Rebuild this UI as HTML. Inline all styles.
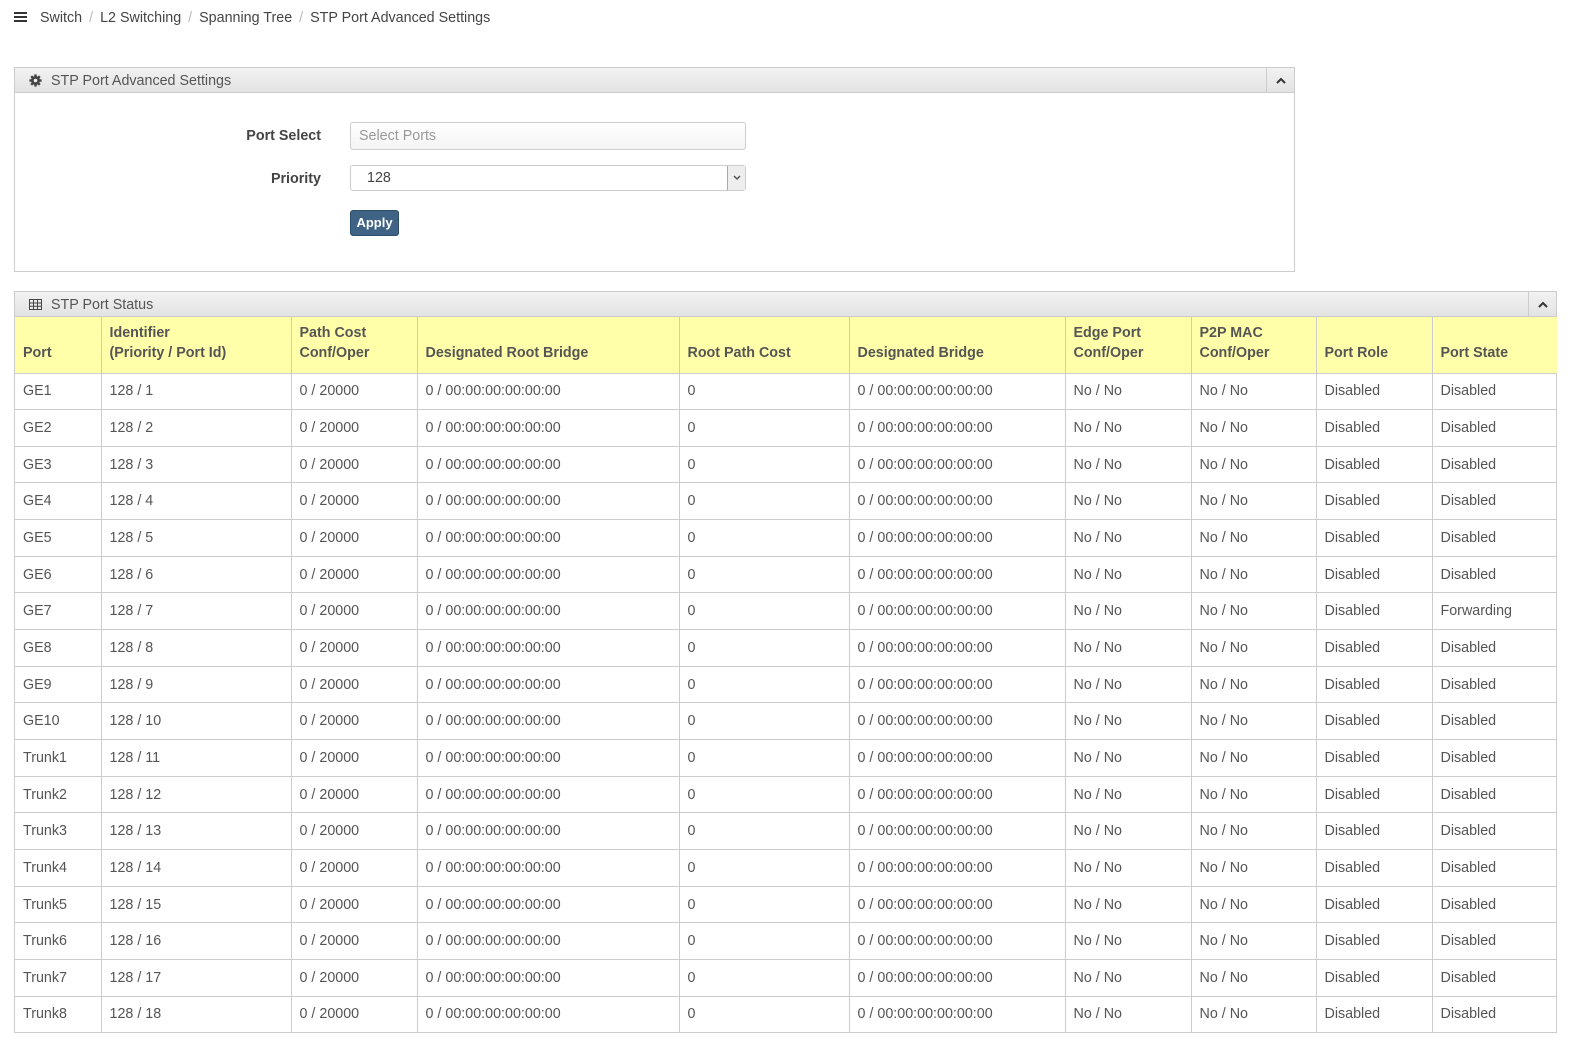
<!DOCTYPE html>
<html><head><meta charset="utf-8"><style>
*{box-sizing:border-box}
html,body{margin:0;overflow:hidden}
body{background:#fff;font-family:"Liberation Sans",Arial,sans-serif;font-size:14.3px;color:#555;width:1582px;height:1053px;position:relative}
.bc{position:absolute;left:14px;top:10px;font-size:14.3px;color:#444}
.bc .s{color:#bbb;margin:0 7px}
.box{position:absolute;border:1px solid #ccc;background:#fff}
.hd{height:25px;background:linear-gradient(#f2f2f2,#e3e3e3);border-bottom:1px solid #ccc;position:relative;font-size:14.3px;color:#555;padding:5px 0 0 36px}
.hd .ic{position:absolute;left:14px;top:6px}
.hd .col{position:absolute;right:0;top:0;width:28px;height:24px;border-left:1px solid #ccc;text-align:center}
.lab{position:absolute;font-weight:bold;color:#444;text-align:right;width:150px}
table{border-collapse:collapse;table-layout:fixed;width:1542px}
th{background:#ffffaa;text-align:left;vertical-align:bottom;font-weight:bold;color:#555;padding:0 8px 10px;height:56px;border:1px solid #ccc;border-top:none;line-height:20px}
td{height:36.67px;padding:0 8px;border:1px solid #ccc;color:#555}
tr th:first-child,tr td:first-child{border-left:none}
tr th:last-child,tr td:last-child{border-right:none}
</style></head><body>
<div class="bc"><svg width="13" height="12" viewBox="0 0 13 12" style="margin-right:13px;vertical-align:-1px"><path d="M0 2h13M0 6h13M0 10h13" stroke="#333" stroke-width="2"/></svg>Switch<span class="s">/</span>L2 Switching<span class="s">/</span>Spanning Tree<span class="s">/</span>STP Port Advanced Settings</div>

<div class="box" style="left:14px;top:67px;width:1281px;height:205px">
<div class="hd"><svg class="ic" width="13" height="13" viewBox="0 0 16 16"><circle cx="8" cy="8" r="5.5" fill="#444"/><g stroke="#444" stroke-width="3"><line x1="8" y1="0.5" x2="8" y2="15.5"/><line x1="0.5" y1="8" x2="15.5" y2="8"/><line x1="2.7" y1="2.7" x2="13.3" y2="13.3"/><line x1="13.3" y1="2.7" x2="2.7" y2="13.3"/></g><circle cx="8" cy="8" r="2.2" fill="#eee"/></svg>STP Port Advanced Settings
<div class="col"><svg width="12" height="24" viewBox="0 0 12 24"><path d="M2 15l4-4 4 4" fill="none" stroke="#333" stroke-width="2"/></svg></div></div>
<div class="lab" style="left:156px;top:60px">Port Select</div>
<div style="position:absolute;left:335px;top:54px;width:396px;height:28px;border:1px solid #ccc;border-radius:3px;background:linear-gradient(#fff,#f4f4f4);color:#999;padding:5px 8px">Select Ports</div>
<div class="lab" style="left:156px;top:103px">Priority</div>
<div style="position:absolute;left:335px;top:97px;width:396px;height:26px;border:1px solid #ccc;border-radius:3px;padding:4px 16px;color:#444">128<div style="position:absolute;right:0;top:0;width:18px;height:24px;border-left:1px solid #aaa;background:#eee;text-align:center"><svg width="10" height="24" viewBox="0 0 10 24"><path d="M2 10l3 3 3-3" fill="none" stroke="#555" stroke-width="1.5"/></svg></div></div>
<div style="position:absolute;left:335px;top:142px;width:49px;height:26px;background:#3e6384;border:1px solid #2d4e6b;border-radius:3px;color:#fff;font-weight:bold;font-size:13px;text-align:center;line-height:24px">Apply</div>
</div>

<div class="box" style="left:14px;top:291px;width:1543px;height:742px">
<div class="hd"><svg class="ic" width="13" height="12" viewBox="0 0 13 12" style="top:7px"><rect x="0.5" y="0.5" width="12" height="10" fill="none" stroke="#444"/><path d="M0.5 4h12M0.5 7.3h12M4.5 0.5v10M8.5 0.5v10" stroke="#444"/></svg>STP Port Status
<div class="col"><svg width="12" height="24" viewBox="0 0 12 24"><path d="M2 15l4-4 4 4" fill="none" stroke="#333" stroke-width="2"/></svg></div></div>
<table>
<colgroup><col style="width:86px"><col style="width:190px"><col style="width:126px"><col style="width:262px"><col style="width:170px"><col style="width:216px"><col style="width:126px"><col style="width:125px"><col style="width:116px"><col style="width:125px"></colgroup>
<tr><th>Port</th><th>Identifier<br>(Priority / Port Id)</th><th>Path Cost<br>Conf/Oper</th><th>Designated Root Bridge</th><th>Root Path Cost</th><th>Designated Bridge</th><th>Edge Port<br>Conf/Oper</th><th>P2P MAC<br>Conf/Oper</th><th>Port Role</th><th>Port State</th></tr>
<tr><td>GE1</td><td>128 / 1</td><td>0 / 20000</td><td>0 / 00:00:00:00:00:00</td><td>0</td><td>0 / 00:00:00:00:00:00</td><td>No / No</td><td>No / No</td><td>Disabled</td><td>Disabled</td></tr>
<tr><td>GE2</td><td>128 / 2</td><td>0 / 20000</td><td>0 / 00:00:00:00:00:00</td><td>0</td><td>0 / 00:00:00:00:00:00</td><td>No / No</td><td>No / No</td><td>Disabled</td><td>Disabled</td></tr>
<tr><td>GE3</td><td>128 / 3</td><td>0 / 20000</td><td>0 / 00:00:00:00:00:00</td><td>0</td><td>0 / 00:00:00:00:00:00</td><td>No / No</td><td>No / No</td><td>Disabled</td><td>Disabled</td></tr>
<tr><td>GE4</td><td>128 / 4</td><td>0 / 20000</td><td>0 / 00:00:00:00:00:00</td><td>0</td><td>0 / 00:00:00:00:00:00</td><td>No / No</td><td>No / No</td><td>Disabled</td><td>Disabled</td></tr>
<tr><td>GE5</td><td>128 / 5</td><td>0 / 20000</td><td>0 / 00:00:00:00:00:00</td><td>0</td><td>0 / 00:00:00:00:00:00</td><td>No / No</td><td>No / No</td><td>Disabled</td><td>Disabled</td></tr>
<tr><td>GE6</td><td>128 / 6</td><td>0 / 20000</td><td>0 / 00:00:00:00:00:00</td><td>0</td><td>0 / 00:00:00:00:00:00</td><td>No / No</td><td>No / No</td><td>Disabled</td><td>Disabled</td></tr>
<tr><td>GE7</td><td>128 / 7</td><td>0 / 20000</td><td>0 / 00:00:00:00:00:00</td><td>0</td><td>0 / 00:00:00:00:00:00</td><td>No / No</td><td>No / No</td><td>Disabled</td><td>Forwarding</td></tr>
<tr><td>GE8</td><td>128 / 8</td><td>0 / 20000</td><td>0 / 00:00:00:00:00:00</td><td>0</td><td>0 / 00:00:00:00:00:00</td><td>No / No</td><td>No / No</td><td>Disabled</td><td>Disabled</td></tr>
<tr><td>GE9</td><td>128 / 9</td><td>0 / 20000</td><td>0 / 00:00:00:00:00:00</td><td>0</td><td>0 / 00:00:00:00:00:00</td><td>No / No</td><td>No / No</td><td>Disabled</td><td>Disabled</td></tr>
<tr><td>GE10</td><td>128 / 10</td><td>0 / 20000</td><td>0 / 00:00:00:00:00:00</td><td>0</td><td>0 / 00:00:00:00:00:00</td><td>No / No</td><td>No / No</td><td>Disabled</td><td>Disabled</td></tr>
<tr><td>Trunk1</td><td>128 / 11</td><td>0 / 20000</td><td>0 / 00:00:00:00:00:00</td><td>0</td><td>0 / 00:00:00:00:00:00</td><td>No / No</td><td>No / No</td><td>Disabled</td><td>Disabled</td></tr>
<tr><td>Trunk2</td><td>128 / 12</td><td>0 / 20000</td><td>0 / 00:00:00:00:00:00</td><td>0</td><td>0 / 00:00:00:00:00:00</td><td>No / No</td><td>No / No</td><td>Disabled</td><td>Disabled</td></tr>
<tr><td>Trunk3</td><td>128 / 13</td><td>0 / 20000</td><td>0 / 00:00:00:00:00:00</td><td>0</td><td>0 / 00:00:00:00:00:00</td><td>No / No</td><td>No / No</td><td>Disabled</td><td>Disabled</td></tr>
<tr><td>Trunk4</td><td>128 / 14</td><td>0 / 20000</td><td>0 / 00:00:00:00:00:00</td><td>0</td><td>0 / 00:00:00:00:00:00</td><td>No / No</td><td>No / No</td><td>Disabled</td><td>Disabled</td></tr>
<tr><td>Trunk5</td><td>128 / 15</td><td>0 / 20000</td><td>0 / 00:00:00:00:00:00</td><td>0</td><td>0 / 00:00:00:00:00:00</td><td>No / No</td><td>No / No</td><td>Disabled</td><td>Disabled</td></tr>
<tr><td>Trunk6</td><td>128 / 16</td><td>0 / 20000</td><td>0 / 00:00:00:00:00:00</td><td>0</td><td>0 / 00:00:00:00:00:00</td><td>No / No</td><td>No / No</td><td>Disabled</td><td>Disabled</td></tr>
<tr><td>Trunk7</td><td>128 / 17</td><td>0 / 20000</td><td>0 / 00:00:00:00:00:00</td><td>0</td><td>0 / 00:00:00:00:00:00</td><td>No / No</td><td>No / No</td><td>Disabled</td><td>Disabled</td></tr>
<tr><td>Trunk8</td><td>128 / 18</td><td>0 / 20000</td><td>0 / 00:00:00:00:00:00</td><td>0</td><td>0 / 00:00:00:00:00:00</td><td>No / No</td><td>No / No</td><td>Disabled</td><td>Disabled</td></tr>
</table>
</div>
</body></html>
